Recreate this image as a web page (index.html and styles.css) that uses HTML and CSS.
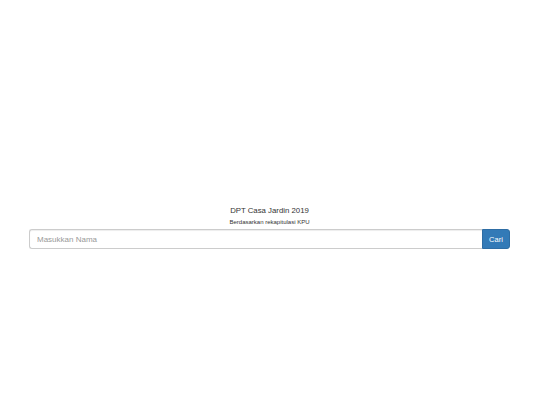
FILE: index.html
```html
<!DOCTYPE html>
<html>
<head>
<meta charset="utf-8">
<link rel="stylesheet" href="styles.css">
</head>
<body>
<div class="page">
  <h1 class="title">DPT Casa Jardin 2019</h1>
  <p class="subtitle">Berdasarkan rekapitulasi KPU</p>
  <form class="search">
    <input class="search-input" type="text" placeholder="Masukkan Nama">
    <button class="search-btn" type="button">Cari</button>
  </form>
</div>
</body>
</html>
```
FILE: styles.css
```css
html, body {
  margin: 0;
  padding: 0;
  background: #fff;
}
body {
  font-family: "Liberation Sans", Arial, sans-serif;
  color: #333;
}
.page {
  padding: 205px 30px 0 29px;
  text-align: center;
}
.title {
  margin: 0;
  font-size: 7.8px;
  font-weight: normal;
  line-height: 11px;
  color: #333;
}
.subtitle {
  margin: 2px 0 3px;
  font-size: 6px;
  line-height: 8px;
  color: #333;
}
.search {
  display: flex;
  margin: 0;
}
.search-input {
  flex: 1;
  height: 20px;
  box-sizing: border-box;
  border: 1px solid #ccc;
  border-right: none;
  border-radius: 3px 0 0 3px;
  padding: 0 7px;
  font-family: "Liberation Sans", Arial, sans-serif;
  font-size: 8px;
  color: #555;
  outline: none;
  box-shadow: inset 0 1px 1px rgba(0,0,0,.075);
}
.search-input::placeholder {
  color: #999;
}
.search-btn {
  width: 28px;
  height: 20px;
  box-sizing: border-box;
  border: 1px solid #2e6da4;
  border-radius: 0 3px 3px 0;
  background: #337ab7;
  color: #fff;
  font-family: "Liberation Sans", Arial, sans-serif;
  font-size: 7.5px;
  padding: 0;
}
```
